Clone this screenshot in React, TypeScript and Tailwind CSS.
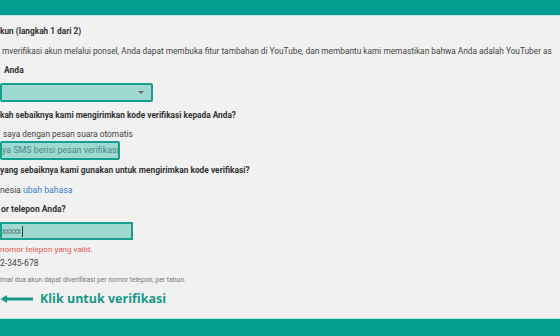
import React from "react";

const font = { fontFamily: "Roboto, 'Liberation Sans', sans-serif" };

export default function App() {
  return (
    <div className="w-[560px] h-[336px] overflow-hidden bg-[#f1f1f1] flex flex-col" style={font}>
      {/* top bar */}
      <div className="h-[16px] bg-[#039e90] border-b border-[#bfe3de] shrink-0" />

      <div className="flex-1 flex flex-col text-[#333] whitespace-nowrap">
        <div className="mt-[9px] text-[8.3px] font-bold leading-[12px]">kun (langkah 1 dari 2)</div>

        <div className="mt-[8px] pl-[2px] text-[8.3px] leading-[12px] text-[#444] overflow-hidden">
          mverifikasi akun melalui ponsel, Anda dapat membuka fitur tambahan di YouTube, dan membantu kami memastikan bahwa Anda adalah YouTuber as
        </div>

        <div className="mt-[7px] pl-[4px] text-[8.5px] font-bold leading-[12px]">Anda</div>

        {/* country select */}
        <div className="mt-[7px] w-[153px] h-[19px] bg-[#9fd9d2] border-2 border-[#15a090] rounded-[2px] flex items-center justify-end pr-[7px]">
          <div className="w-0 h-0 border-l-[3px] border-r-[3px] border-t-[3px] border-l-transparent border-r-transparent border-t-[#666]" />
        </div>

        <div className="mt-[7px] text-[8.3px] font-bold leading-[12px]">kah sebaiknya kami mengirimkan kode verifikasi kepada Anda?</div>

        <div className="mt-[7px] pl-[3px] text-[8.4px] leading-[12px] text-[#444]">saya dengan pesan suara otomatis</div>

        <div className="mt-[1px] w-[120px] h-[19px] bg-[#9fd9d2] border-2 border-[#15a090] rounded-[2px] flex items-center text-[8.9px] text-[#4a8a82]">
          ya SMS berisi pesan verifikasi
        </div>

        <div className="mt-[4px] text-[8.4px] font-bold leading-[12px]">yang sebaiknya kami gunakan untuk mengirimkan kode verifikasi?</div>

        <div className="mt-[8px] text-[8.7px] leading-[12px] text-[#444]">
          nesia <span className="text-[#3b7fd0]">ubah bahasa</span>
        </div>

        <div className="mt-[7px] pl-[1px] text-[8.5px] font-bold leading-[12px]">or telepon Anda?</div>

        {/* phone input */}
        <div className="mt-[7px] w-[133px] h-[18px] bg-[#9fd9d2] border-2 border-[#15a090] flex items-center text-[8.5px] text-[#5a7f7a]">
          <span className="tracking-[-0.5px]">xxxxx</span>
          <span className="ml-[1px] w-px h-[11px] bg-[#333]" />
        </div>

        <div className="mt-[3px] text-[8.1px] leading-[12px] text-[#e8554a]">nomor telepon yang valid.</div>

        <div className="mt-[2px] text-[8.6px] leading-[12px] text-[#444]">2-345-678</div>

        <div className="mt-[6px] text-[6.8px] leading-[10px] text-[#777]">imal dua akun dapat diverifikasi per nomor telepon, per tahun.</div>

        {/* callout */}
        <div className="mt-[5px] flex items-center gap-[6px]">
          <svg width="34" height="10" viewBox="0 0 34 10">
            <path d="M0.5 5 L7 1 L7 3.6 L33 3.6 L33 6.4 L7 6.4 L7 9 Z" fill="#16998a" />
          </svg>
          <span
            className="text-[12.5px] font-bold leading-[18px] text-[#16998a]"
            style={{ fontFamily: "'Open Sans', 'Noto Sans', sans-serif" }}
          >
            Klik untuk verifikasi
          </span>
        </div>
      </div>

      {/* bottom bar */}
      <div className="h-[18px] bg-[#039e90] border-t border-[#bfe3de] shrink-0" />
    </div>
  );
}
